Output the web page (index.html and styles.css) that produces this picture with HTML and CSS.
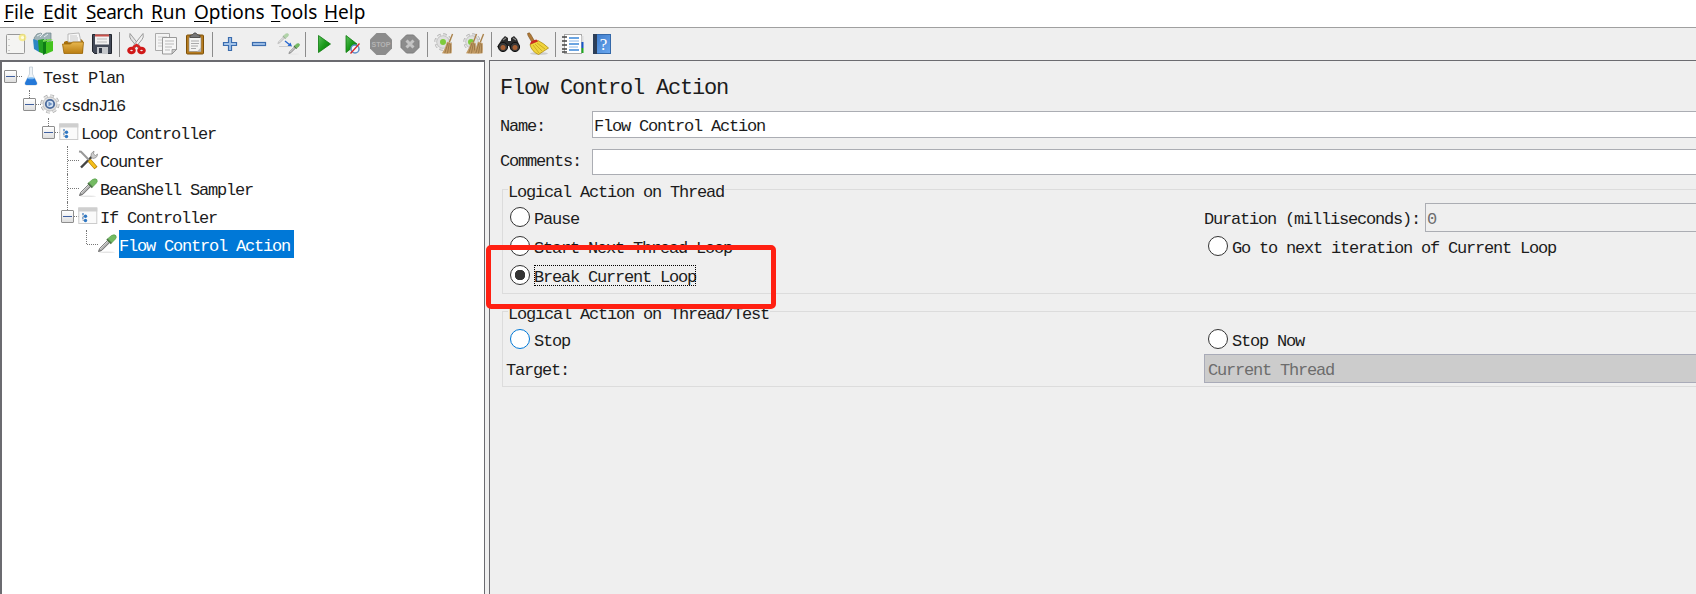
FILE: index.html
```html
<!DOCTYPE html>
<html lang="en">
<head>
    <meta charset="UTF-8">
    <meta name="viewport" content="width=device-width, initial-scale=1.0">
    <title>Flow Control Action</title>
    <link rel="stylesheet" href="styles.css">
</head>
<body>
    <!-- shared icons -->
    <svg class="defs" width="0" height="0">
        <defs>
            <linearGradient id="green" x1="0" y1="0" x2="1" y2="1">
                <stop offset="0" stop-color="#5cc05c"/><stop offset=".5" stop-color="#1a9a1a"/><stop offset="1" stop-color="#087008"/>
            </linearGradient>
            <linearGradient id="gold" x1="0" y1="0" x2="0" y2="1">
                <stop offset="0" stop-color="#e8b850"/><stop offset="1" stop-color="#b97c10"/>
            </linearGradient>
            <linearGradient id="blue" x1="0" y1="0" x2="1" y2="1">
                <stop offset="0" stop-color="#3a78c8"/><stop offset="1" stop-color="#6aa8f0"/>
            </linearGradient>
            <symbol id="dropper" viewBox="0 0 20 20">
                <ellipse cx="10" cy="18.300" rx="8" ry=".8" fill="#e4e4e4"/>
                <path d="M1.500 17.500l1.200-3 8-8 2 2-8 8z" fill="#eee" stroke="#666" stroke-width="1"/>
                <path d="M2.500 17l9-9" stroke="#555" stroke-width=".8"/>
                <path d="M10 5l4.500 4.500" stroke="#4c7444" stroke-width="2"/>
                <path d="M11 4.500l3.500-3q3-1.500 4.500.2.800 2-.8 3.600l-3.200 3.200z" fill="#74bb62" stroke="#559e48" stroke-width=".7"/>
            </symbol>
            <symbol id="controller" viewBox="0 0 20 20">
                <rect x=".8" y="2" width="18" height="15.500" fill="#fafafa" stroke="#ccc"/>
                <rect x=".3" y="1.500" width="19" height="4" fill="#cfcfcf"/>
                <path d="M5 7.500v7.500M5 10.500h2M5 14.500h2" stroke="#aaa" stroke-width=".8"/>
                <path d="M4 8h2M4 12h1.500" stroke="#6a98cc" stroke-width="1.300"/>
                <circle cx="7.500" cy="10.300" r="1.700" fill="#2f78c4"/>
                <circle cx="7.500" cy="14.500" r="1.700" fill="#2f78c4"/>
            </symbol>
            <symbol id="cog" viewBox="0 0 20 20">
                <circle cx="10" cy="10" r="7.800" fill="none" stroke="#aaa" stroke-width="3.600" stroke-dasharray="3.500 2.620"/>
                <circle cx="10" cy="10" r="7.800" fill="none" stroke="#e6e6e6" stroke-width="2.200" stroke-dasharray="3.100 3.020"/>
                <circle cx="10" cy="10" r="7" fill="#e0e0e0" stroke="#b4b4b4" stroke-width=".7"/>
            </symbol>
            <symbol id="straw" viewBox="0 0 14 24">
                <path d="M12.500 1L9 10" stroke="#a98048" stroke-width="1.500"/>
                <path d="M6.500 9.500l5 1.500q.5 7 0 11-5 1-10.500 0 4-6 5.500-12.500z" fill="#c39b64"/>
                <path d="M7.500 11L4 22M9 11L7 22M10.500 12L10 22" stroke="#8d6b3e" stroke-width=".8"/>
            </symbol>
        </defs>
    </svg>

    <div class="menubar">
        <span class="file"><u>F</u>ile</span>
        <span class="edit"><u>E</u>dit</span>
        <span class="search"><u>S</u>earch</span>
        <span class="run"><u>R</u>un</span>
        <span class="options"><u>O</u>ptions</span>
        <span class="tools"><u>T</u>ools</span>
        <span class="help"><u>H</u>elp</span>
    </div>

    <div class="toolbar">
        <!-- new -->
        <div class="tool"><svg viewBox="0 0 24 24">
            <rect x="3.500" y="2.500" width="18" height="19" rx="1" fill="#f4f4f2" stroke="#999"/>
            <path d="M6 7v1M6 13v1M6 18v1" stroke="#aaa"/>
            <circle cx="19.500" cy="5.500" r="3.800" fill="#f5e87a" opacity=".8"/><circle cx="19.500" cy="5.500" r="1.600" fill="#fffde0"/>
        </svg></div>
        <!-- templates -->
        <div class="tool"><svg viewBox="0 0 24 24">
            <path d="M2 6l3-4 4-1 2 2 3-2 5 0v8l-6 3-9-1z" fill="#9fb3b8" stroke="#71858a" stroke-width=".7"/>
            <path d="M5 4l4-2M8 5l3-3M12 5l4-3" stroke="#e6eef0"/>
            <path d="M1 7l6 2v11l-5-3z" fill="#2c87c4"/>
            <path d="M6 8l6-1v15l-5-2z" fill="#23a023"/>
            <path d="M11 10l4-3v14l-4 2z" fill="#0d7c15"/>
            <path d="M14 10l7-1v10l-7 3z" fill="#44c41f"/>
            <path d="M11 10l10-2-3-1-7 1z" fill="#76dc50"/>
        </svg></div>
        <!-- open -->
        <div class="tool"><svg viewBox="0 0 24 24">
            <path d="M3 10l2-1 2 0v-2h13l2 2v12H3z" fill="#a8700c"/>
            <path d="M7 2l11-1 2 9H7z" fill="#f8f8f8" stroke="#aaa" stroke-width=".8"/>
            <path d="M9 4h7M9 6h8M9 8h8" stroke="#bbb" stroke-width=".8"/>
            <path d="M1.500 12h8l2-2h11l-1 11.500h-18.500z" fill="url(#gold)" stroke="#9c6708" stroke-width=".8"/>
        </svg></div>
        <!-- save -->
        <div class="tool"><svg viewBox="0 0 24 24">
            <path d="M2.500 2.500h19v19h-17l-2-2z" fill="#434a58" stroke="#22262e"/>
            <rect x="5" y="2.500" width="14" height="10" fill="#f2f2f2"/><rect x="5" y="2.500" width="14" height="2" fill="#c9504a"/>
            <path d="M7 7h10M7 10h10" stroke="#bbb"/>
            <rect x="7" y="15" width="11" height="7" fill="#c5c8cc"/><rect x="9" y="16" width="3" height="5" fill="#333a48"/>
        </svg></div>
        <div class="sep"></div>
        <!-- cut -->
        <div class="tool"><svg viewBox="0 0 24 24">
            <path d="M5 1.500q-1 4 1 6l6.500 8 2-2z" fill="#e4e4e4" stroke="#888" stroke-width=".8"/>
            <path d="M18 1.500q1 4-1 6l-6.500 8-2-2z" fill="#f2f2f2" stroke="#888" stroke-width=".8"/>
            <ellipse cx="6.500" cy="18.500" rx="2.800" ry="2.300" fill="none" stroke="#d01818" stroke-width="3"/>
            <ellipse cx="16.500" cy="18.500" rx="2.800" ry="2.300" fill="none" stroke="#d01818" stroke-width="3"/>
            <path d="M8 15.500l3.500-2.500 3.500 2.500" stroke="#d82020" stroke-width="2.500" fill="none"/>
        </svg></div>
        <!-- copy -->
        <div class="tool"><svg viewBox="0 0 24 24">
            <path d="M1.500 1.500h14v17h-14z" fill="#f4f4f4" stroke="#aaa"/>
            <path d="M4 5h9M4 8h9M4 11h9M4 14h9" stroke="#ccc"/>
            <path d="M8.500 5.500h14v12l-4.500 4.500h-9.500z" fill="#f6f6f6" stroke="#999"/>
            <path d="M11 9h9M11 12h9M11 15h7M11 18h5" stroke="#bbb"/>
            <path d="M22.500 17.500l-4.500 4.500v-4.500z" fill="#ccc" stroke="#888" stroke-width=".7"/>
        </svg></div>
        <!-- paste -->
        <div class="tool"><svg viewBox="0 0 24 24">
            <rect x="3.500" y="3" width="17" height="19" rx="1" fill="#b67b1e" stroke="#7d5008"/>
            <path d="M6 5.500h12v14H6z" fill="#f4f4f2" stroke="#888" stroke-width=".6"/>
            <path d="M8 9h8M8 11.500h8M8 14h7M8 16.500h5" stroke="#aaa"/>
            <path d="M18 15.500v4h-4z" fill="#bbb"/>
            <path d="M7 5.500v-2l3-1 1-1.500h2l1 1.500 3 1v2z" fill="#777" stroke="#444" stroke-width=".8"/>
        </svg></div>
        <div class="sep"></div>
        <!-- expand / collapse -->
        <div class="tool"><svg viewBox="0 0 24 24">
            <path d="M10.500 5.500h3v5h5v3h-5v5h-3v-5h-5v-3h5z" fill="#a3c4ea" stroke="#3a6cae" stroke-width="1.200"/>
        </svg></div>
        <div class="tool"><svg viewBox="0 0 24 24">
            <rect x="5.500" y="10.500" width="13" height="3" fill="#a3c4ea" stroke="#3a6cae" stroke-width="1.200"/>
        </svg></div>
        <!-- toggle -->
        <div class="tool"><svg viewBox="0 0 24 24">
            <g opacity=".5"><use href="#dropper" x="1" y="1" width="12" height="12"/></g>
            <use href="#dropper" x="12" y="11" width="12" height="12"/>
            <path d="M9 9l5 4" stroke="#2868d0" stroke-width="1.400"/><path d="M16 14.500l-4.500-.5 3-3.500z" fill="#2868d0"/>
            <path d="M3 14.500h12" stroke="#ccc"/>
        </svg></div>
        <div class="sep"></div>
        <!-- start -->
        <div class="tool"><svg viewBox="0 0 24 24"><path d="M7.500 3.500l12 8.500-12 8.500z" fill="url(#green)" stroke="#0a7a0a" stroke-width=".8"/></svg></div>
        <!-- start no pauses -->
        <div class="tool"><svg viewBox="0 0 24 24">
            <path d="M6 3.500l11 8.500-11 8.500z" fill="url(#green)" stroke="#0a7a0a" stroke-width=".8"/>
            <circle cx="15" cy="17" r="4" fill="#f2f6fb" stroke="#5c8fc8" stroke-width="1.500"/>
            <path d="M19.500 11.500l-9 10" stroke="#d82626" stroke-width="1.300"/>
        </svg></div>
        <!-- stop -->
        <div class="tool"><svg viewBox="0 0 24 24">
            <path d="M7.500 1h9L23 7.500v9L16.500 23h-9L1 16.500v-9z" fill="#8c8c8c"/>
            <text x="12" y="15.300" class="stop-text" textLength="19" lengthAdjust="spacingAndGlyphs">STOP</text>
        </svg></div>
        <!-- shutdown -->
        <div class="tool"><svg viewBox="0 0 24 24">
            <path d="M8.500 3h7L21 8.500v7L15.500 21h-7L3 15.500v-7z" fill="#8c8c8c" stroke="#7c7c7c"/>
            <path d="M8.500 8.500l7 7M15.500 8.500l-7 7" stroke="#c4c4c4" stroke-width="3"/>
        </svg></div>
        <div class="sep"></div>
        <!-- clear -->
        <div class="tool"><svg viewBox="0 0 24 24">
            <use href="#cog" x="1" y="1" width="18" height="18"/><circle cx="10" cy="10" r="3" fill="#7ecb3c"/>
            <use href="#straw" x="8" y="1" width="13" height="22"/>
        </svg></div>
        <!-- clear all -->
        <div class="tool"><svg viewBox="0 0 24 24">
            <use href="#cog" x="1" y="1" width="18" height="18"/><circle cx="9" cy="10" r="3" fill="#7ecb3c"/>
            <use href="#straw" x="3" y="1" width="13" height="22"/><use href="#straw" x="10" y="1" width="13" height="22"/>
        </svg></div>
        <div class="sep"></div>
        <!-- search -->
        <div class="tool"><svg viewBox="0 0 24 24">
            <path d="M5 7l3-3 3 2v3h3V6l3-2 3 3 3 8-9 3-2-4h-2l-2 4-8-3z" fill="#2c2c2c"/>
            <path d="M6 8l3-2M16 6l3 2" stroke="#888" stroke-width="1.200"/>
            <circle cx="6" cy="15" r="4.600" fill="#383838" stroke="#111"/><circle cx="18" cy="15" r="4.600" fill="#383838" stroke="#111"/>
            <circle cx="6" cy="15.500" r="2.500" fill="#a65f33"/><circle cx="18" cy="15.500" r="2.500" fill="#a65f33"/>
        </svg></div>
        <!-- reset search -->
        <div class="tool"><svg viewBox="0 0 24 24">
            <ellipse cx="13" cy="21.500" rx="9" ry="1.500" fill="#ccc"/>
            <path d="M1.500 1.500q2-1.500 3 .5l4 7-2.500 1.500-4-7z" fill="#b07a38" stroke="#7b5020" stroke-width=".6"/>
            <path d="M4 12.500l8-4q6 3 10.500 7.500l-10 6.500q-7-3-8.500-10z" fill="#f0d43c" stroke="#b08e10" stroke-width=".8"/>
            <path d="M4 12.500q0-4 6.500-5l1.500 2z" fill="#cc2a20"/>
            <path d="M7 13l6 8M9 12l7 7M11 11l8 6" stroke="#c9a820" stroke-width=".9"/>
        </svg></div>
        <div class="sep"></div>
        <!-- function helper -->
        <div class="tool"><svg viewBox="0 0 24 24">
            <rect x="3.500" y="2.500" width="17" height="19" fill="#fff" stroke="#aaa"/>
            <path d="M21.500 4v6" stroke="#ddd" stroke-width="2"/><path d="M21.500 10v6" stroke="#1857c8" stroke-width="2"/><path d="M21.500 16v5" stroke="#1fa81f" stroke-width="2"/>
            <path d="M1 5h5M1 9h5M1 13h5M1 17h5M1 20h5" stroke="#444" stroke-width="1.300"/>
            <path d="M8 6h10M8 12h10M8 18h10" stroke="#3a86d8" stroke-width="1.500"/><path d="M8 9h10M8 15h9" stroke="#8cb8e8"/>
        </svg></div>
        <!-- help -->
        <div class="tool"><svg viewBox="0 0 24 24">
            <rect x="3.500" y="2.500" width="17" height="19" fill="url(#blue)" stroke="#3468a8"/>
            <rect x="3" y="2" width="4" height="20" fill="#2c3e58"/>
            <text x="13.500" y="17.500" class="help-text">?</text>
        </svg></div>
    </div>

    <div class="main">
        <div class="tree">
            <ul>
                <li class="root">
                    <div class="row"><i class="toggle"></i>
                        <svg class="icon" viewBox="0 0 20 20">
                            <path d="M8.500 1h3v7l4.500 9q.5 2-1.500 2h-9q-2 0-1.500-2l4.500-9z" fill="#eef3f7" stroke="#c0ccd6" stroke-width=".8"/>
                            <path d="M6.500 12h7l2.500 5q.3 2-1.500 2h-9q-1.800 0-1.500-2z" fill="#2478d8"/><ellipse cx="10" cy="12.300" rx="3.500" ry="1" fill="#7ab8f0"/>
                        </svg><span>Test Plan</span></div>
                    <ul>
                        <li class="last">
                            <div class="row"><i class="toggle"></i>
                                <svg class="icon" viewBox="0 0 20 20"><use href="#cog"/><circle cx="10" cy="10" r="4.200" fill="#d5e3f3" stroke="#4a6a9c" stroke-width="1.800"/><path d="M8.500 7.500l4 2.500-4 2.500z" fill="#6d93c4"/></svg>
                                <span>csdnJ16</span></div>
                            <ul>
                                <li class="last">
                                    <div class="row"><i class="toggle"></i><svg class="icon"><use href="#controller"/></svg><span>Loop Controller</span></div>
                                    <ul>
                                        <li>
                                            <div class="row leaf">
                                                <svg class="icon" viewBox="0 0 20 20">
                                                    <path d="M3 17.500L14 6.500" stroke="#444" stroke-width="2.400"/>
                                                    <path d="M13 7q-1-4 3-6l-.5 3 2 1.500 2-1.500q0 4-4.500 4.500z" fill="#ccc" stroke="#888" stroke-width=".7"/>
                                                    <path d="M1 1.500l2 .2 8 8.300" stroke="#999" stroke-width="2" fill="none"/>
                                                    <path d="M11 10l7 8" stroke="#a87400" stroke-width="4"/><path d="M11.500 10.500l6 7" stroke="#f5c01c" stroke-width="2.800"/>
                                                </svg><span>Counter</span></div>
                                        </li>
                                        <li>
                                            <div class="row leaf"><svg class="icon"><use href="#dropper"/></svg><span>BeanShell Sampler</span></div>
                                        </li>
                                        <li class="last">
                                            <div class="row"><i class="toggle"></i><svg class="icon"><use href="#controller"/></svg><span>If Controller</span></div>
                                            <ul>
                                                <li class="last">
                                                    <div class="row leaf"><svg class="icon"><use href="#dropper"/></svg><span class="selected">Flow Control Action</span></div>
                                                </li>
                                            </ul>
                                        </li>
                                    </ul>
                                </li>
                            </ul>
                        </li>
                    </ul>
                </li>
            </ul>
        </div>

        <div class="panel">
            <h1>Flow Control Action</h1>
            <div class="field name"><label>Name:</label><div class="input">Flow Control Action</div></div>
            <div class="field comments"><label>Comments:</label><div class="input"></div></div>

            <div class="groups">
                <fieldset>
                    <legend>Logical Action on Thread</legend>
                    <div class="options-grid">
                        <div class="option"><i class="radio"></i><span>Pause</span></div>
                        <div class="duration"><span>Duration (milliseconds):</span><div class="input disabled">0</div></div>
                        <div class="option"><i class="radio"></i><span>Start Next Thread Loop</span></div>
                        <div class="option"><i class="radio"></i><span>Go to next iteration of Current Loop</span></div>
                        <div class="option"><i class="radio checked"></i><span class="focused">Break Current Loop</span></div>
                    </div>
                </fieldset>
                <div class="highlight"></div>
                <fieldset>
                    <legend>Logical Action on Thread/Test</legend>
                    <div class="options-grid">
                        <div class="option"><i class="radio hover"></i><span>Stop</span></div>
                        <div class="option"><i class="radio"></i><span>Stop Now</span></div>
                        <div class="target">Target:</div>
                        <div class="select">Current Thread</div>
                    </div>
                </fieldset>
            </div>
        </div>
    </div>
</body>
</html>
```
FILE: styles.css
```css
* {
    box-sizing: border-box;
}
body {
    margin: 0;
    height: 594px;
    display: flex;
    flex-direction: column;
    overflow: hidden;
    background: #efefef;
    color: #1c1c1c;
    font-family: "Liberation Mono", monospace;
    font-size: 17px;
    letter-spacing: -1.2px;
    white-space: nowrap;
}
.defs {
    position: absolute;
}

/* menu */
.menubar {
    display: flex;
    height: 28px;
    flex: none;
    padding-left: 4px;
    background: #fff;
    border-bottom: 1px solid #a0a0a0;
    color: #000;
    font-family: "Noto Sans", sans-serif;
    font-size: 19px;
    line-height: 25px;
    letter-spacing: 0;
}
.menubar u {
    text-underline-offset: 2px;
    text-decoration-thickness: 1px;
}
.file { width: 39px; }
.edit { width: 43px; }
.search { width: 65px; letter-spacing: -0.5px; }
.run { width: 43px; }
.options { width: 77px; }
.tools { width: 53px; }

/* toolbar */
.toolbar {
    display: flex;
    flex: none;
    height: 32px;
    align-items: center;
}
.tool {
    width: 29px;
    height: 24px;
    display: flex;
    justify-content: center;
}
.tool svg {
    width: 24px;
    height: 24px;
}
.sep {
    width: 6px;
    height: 25px;
    background: linear-gradient(#8c8c8c, #8c8c8c) 3px 0 / 1px 100% no-repeat;
}
.stop-text {
    font: bold 8px "Liberation Sans", sans-serif;
    letter-spacing: 0;
    text-anchor: middle;
    fill: #b4b4b4;
}
.help-text {
    font: 17px "Liberation Serif", serif;
    letter-spacing: 0;
    text-anchor: middle;
    fill: #fff;
}

.main {
    display: flex;
    flex: 1;
    min-height: 0;
}

/* tree */
.tree {
    width: 485px;
    flex: none;
    background: #fff;
    border: 2px solid #6b6b70;
    border-right-width: 1px;
    border-bottom: none;
}
.tree ul {
    list-style: none;
    margin: 0;
    padding: 0;
}
.tree ul ul {
    padding-left: 19px;
}
.tree li {
    position: relative;
}
.tree ul ul li::before {
    content: "";
    position: absolute;
    left: 8px;
    top: 0;
    height: 100%;
    border-left: 1px dotted #777;
}
.tree ul ul li.last::before {
    height: 14px;
}
.row {
    position: relative;
    display: flex;
    align-items: center;
    height: 28px;
    padding-left: 2px;
}
.row::before {
    content: "";
    position: absolute;
    left: 9px;
    top: 14px;
    width: 11px;
    border-top: 1px dotted #777;
}
.leaf {
    padding-left: 15px;
}
.toggle {
    position: relative;
    width: 13px;
    height: 13px;
    border: 1px solid #8e8e8e;
    border-radius: 1px;
    background: linear-gradient(#4060a0, #4060a0) center / 9px 1px no-repeat, linear-gradient(#fff, #dedede);
}
.icon {
    position: relative;
    width: 20px;
    height: 20px;
    margin: 0 2px 0 4px;
}
.row span {
    height: 28px;
    line-height: 28px;
    padding-top: 3px;
}
.row .selected {
    width: 175px;
    background: #0078d7;
    color: #fff;
}

/* right side */
.panel {
    flex: 1;
    min-width: 0;
    margin-left: 4px;
    padding: 11px 0 0 10px;
    border-left: 1px solid #6b6b70;
    border-top: 1px solid #6b6b70;
}
h1 {
    margin: 0;
    height: 39px;
    font-size: 22px;
    font-weight: normal;
    line-height: 33px;
}
.field {
    display: flex;
    margin-right: -10px;
}
.field label {
    width: 92px;
    line-height: 26px;
    padding-top: 3px;
}
.name {
    height: 27px;
    margin-bottom: 11px;
}
.comments {
    height: 26px;
    margin-bottom: 5px;
}
.comments label {
    padding-top: 0;
}
.input {
    flex: 1;
    padding: 3px 0 0 1px;
    background: #fff;
    border: 1px solid #abadb3;
    line-height: 24px;
}
.disabled {
    padding-top: 2px;
    background: #efefef;
    color: #6d6d6d;
    line-height: 27px;
}
.groups {
    position: relative;
    margin: 0 -10px 0 2px;
}
fieldset {
    margin: 0 0 8px;
    padding: 5px 0 3px 3px;
    border: 1px solid #dcdcdc;
}
legend {
    height: 18px;
    margin-left: 2px;
    padding: 3px 1px 0 0;
    line-height: 19px;
}
.options-grid {
    display: grid;
    grid-template-columns: 698px 1fr;
    grid-auto-rows: 29px;
}
.option {
    display: flex;
    align-items: center;
    padding-left: 4px;
}
.option span {
    padding-top: 3px;
    line-height: 21px;
}
.radio {
    width: 20px;
    height: 20px;
    margin: 0 4px 1px 0;
    border: 1px solid #333;
    border-radius: 50%;
    background: #fff;
}
.checked {
    background: radial-gradient(circle, #333 5px, #fff 5.500px);
}
.hover {
    border-color: #0078d7;
}
.option .focused {
    height: 21px;
    width: 162px;
    line-height: 19px;
    outline: 1px dotted #000;
    outline-offset: -1px;
}
.duration {
    display: flex;
}
.duration span {
    width: 221px;
    padding-top: 3px;
    line-height: 28px;
}
.target {
    padding-top: 3px;
    line-height: 28px;
}
.select {
    padding: 2px 0 0 3px;
    background: #ccc;
    border: 1px solid #a9abb8;
    color: #6d6d6d;
    line-height: 27px;
}
.highlight {
    position: absolute;
    left: -16px;
    top: 65px;
    width: 290px;
    height: 64px;
    border: 5px solid #ff2012;
    border-radius: 5px;
}
```
